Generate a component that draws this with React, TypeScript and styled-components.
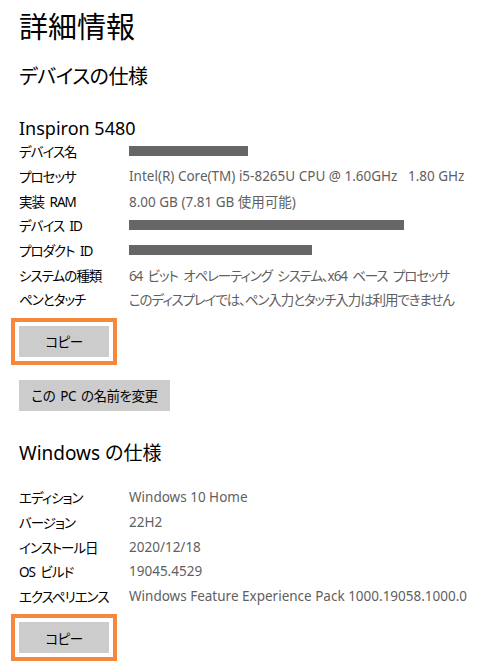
import React from "react";
import styled, { createGlobalStyle } from "styled-components";

const GlobalStyle = createGlobalStyle`
  body {
    margin: 0;
    background: #ffffff;
    font-family: "Noto Sans", "Noto Sans CJK JP", sans-serif;
    font-feature-settings: "palt";
  }
`;

interface SpecRow {
  label: string;
  value?: string;
  hidden?: number;
  kana?: boolean;
}

const deviceRows: SpecRow[] = [
  { label: "デバイス名", hidden: 119 },
  { label: "プロセッサ", value: "Intel(R) Core(TM) i5-8265U CPU @ 1.60GHz\u00a0\u00a0\u00a01.80 GHz" },
  { label: "実装 RAM", value: "8.00 GB (7.81 GB 使用可能)" },
  { label: "デバイス ID", hidden: 275 },
  { label: "プロダクト ID", hidden: 183 },
  { label: "システムの種類", value: "64 ビット オペレーティング システム、x64 ベース プロセッサ", kana: true },
  { label: "ペンとタッチ", value: "このディスプレイでは、ペン入力とタッチ入力は利用できません", kana: true },
];

const windowsRows: SpecRow[] = [
  { label: "エディション", value: "Windows 10 Home" },
  { label: "バージョン", value: "22H2" },
  { label: "インストール日", value: "2020/12/18" },
  { label: "OS ビルド", value: "19045.4529" },
  { label: "エクスペリエンス", value: "Windows Feature Experience Pack 1000.19058.1000.0" },
];

const SpecTable = ({ rows }: { rows: SpecRow[] }) => (
  <Table>
    {rows.map((row) => (
      <Row key={row.label}>
        <Label>{row.label}</Label>
        {row.hidden ? (
          <Redacted style={{ width: row.hidden }} />
        ) : (
          <Value $kana={row.kana}>{row.value}</Value>
        )}
      </Row>
    ))}
  </Table>
);

const App = () => {
  return (
    <Page>
      <GlobalStyle />
      <Title>詳細情報</Title>
      <Heading>デバイスの仕様</Heading>
      <DeviceName>Inspiron 5480</DeviceName>
      <SpecTable rows={deviceRows} />
      <Highlight>
        <Button $width={90}>コピー</Button>
      </Highlight>
      <RenameArea>
        <Button $width={151}>この PC の名前を変更</Button>
      </RenameArea>
      <WindowsHeading>Windows の仕様</WindowsHeading>
      <SpecTable rows={windowsRows} />
      <Highlight>
        <Button $width={90}>コピー</Button>
      </Highlight>
    </Page>
  );
};

const Page = styled.div`
  width: 480px;
  height: 664px;
  box-sizing: border-box;
  padding: 8px 0 0 19px;
  overflow: hidden;
  color: #000;
`;

const Title = styled.h1`
  margin: 0;
  font-size: 29px;
  font-weight: 400;
  line-height: 38px;
`;

const Heading = styled.h2`
  margin: 17px 0 0;
  font-size: 20px;
  font-weight: 400;
  line-height: 28px;
  letter-spacing: -0.5px;
`;

const WindowsHeading = styled(Heading)`
  margin-top: 28px;
  margin-bottom: 18px;
  font-size: 19px;
  letter-spacing: 0;
`;

const DeviceName = styled.div`
  margin-top: 26px;
  font-size: 18px;
  line-height: 22px;
`;

const Table = styled.div`
  display: flex;
  flex-direction: column;
`;

const Row = styled.div`
  display: grid;
  grid-template-columns: 110px 1fr;
  align-items: center;
  height: 24.7px;
  font-size: 13.5px;
  white-space: nowrap;
`;

const Label = styled.span`
  color: #000;
  letter-spacing: -1px;
  word-spacing: 3px;
`;

const Value = styled.span<{ $kana?: boolean }>`
  color: #5f5f5f;
  letter-spacing: ${(p) => (p.$kana ? "-1.1px" : "0")};
  word-spacing: ${(p) => (p.$kana ? "3px" : "0")};
`;

const Redacted = styled.div`
  height: 10px;
  background: #666666;
`;

const Highlight = styled.div`
  display: inline-block;
  margin: 6px 0 0 -8px;
  padding: 4px;
  border: 4px solid #f5883c;
`;

const RenameArea = styled.div`
  margin-top: 15px;
`;

const Button = styled.button<{ $width: number }>`
  display: flex;
  align-items: center;
  justify-content: center;
  width: ${(p) => p.$width}px;
  height: 31px;
  padding: 0;
  border: none;
  background: #cccccc;
  color: #000;
  font-family: "Noto Sans", "Noto Sans CJK JP", sans-serif;
  font-feature-settings: "palt";
  font-size: 13.5px;
  letter-spacing: -0.5px;
  word-spacing: 2px;
`;

export default App;
